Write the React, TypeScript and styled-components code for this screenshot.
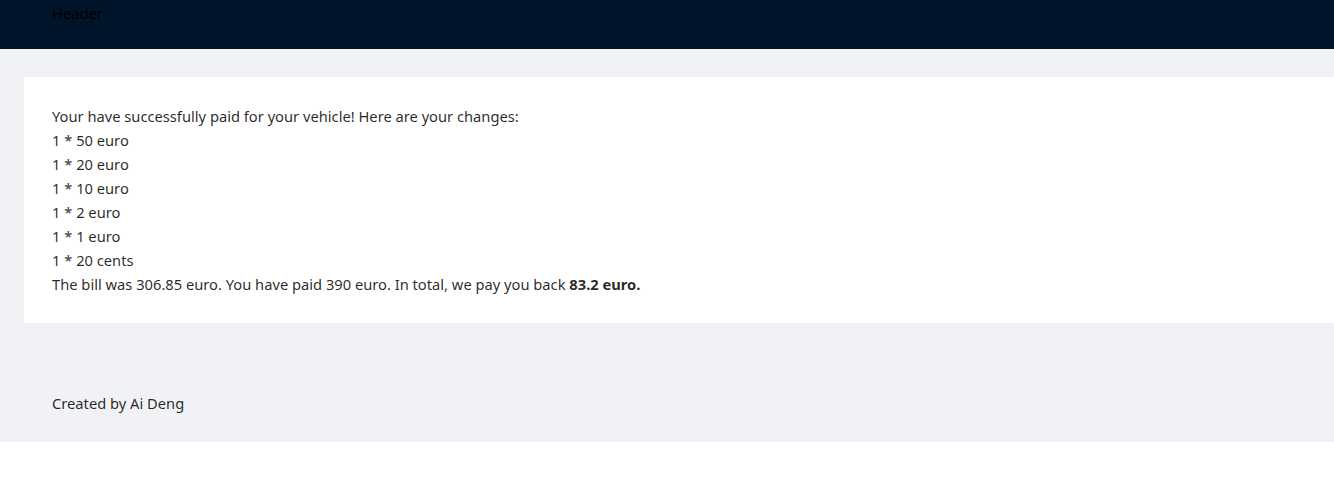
import React from "react";
import styled, { createGlobalStyle } from "styled-components";

const Global = createGlobalStyle`
  html, body { margin: 0; padding: 0; background: #fff; }
  body {
    font-family: "Noto Sans", "Open Sans", sans-serif;
    font-size: 14.7px;
    color: rgba(0, 0, 0, 0.85);
  }
`;

const Layout = styled.div`
  display: flex;
  flex-direction: column;
  background: #f0f2f5;
`;

const Header = styled.header`
  height: 49px;
  background: #001529;
  padding: 0 52px;
  line-height: 26px;
  color: #000;
  box-sizing: border-box;
`;

const Main = styled.main`
  padding: 28px 0 0 24px;
`;

const Card = styled.section`
  background: #fff;
  padding: 27px 28px 27px;
  display: flex;
  flex-direction: column;
`;

const Line = styled.div`
  line-height: 24px;
  white-space: nowrap;
`;

const Footer = styled.footer`
  padding: 69px 52px 28px;
  line-height: 22px;
`;

const changes = ["1 * 50 euro", "1 * 20 euro", "1 * 10 euro", "1 * 2 euro", "1 * 1 euro", "1 * 20 cents"];

export default function App() {
  return (
    <>
      <Global />
      <Layout>
        <Header>Header</Header>
        <Main>
          <Card>
            <Line>Your have successfully paid for your vehicle! Here are your changes:</Line>
            {changes.map((c) => (
              <Line key={c}>{c}</Line>
            ))}
            <Line>
              The bill was 306.85 euro. You have paid 390 euro. In total, we pay you back <b>83.2 euro.</b>
            </Line>
          </Card>
        </Main>
        <Footer>Created by Ai Deng</Footer>
      </Layout>
    </>
  );
}
